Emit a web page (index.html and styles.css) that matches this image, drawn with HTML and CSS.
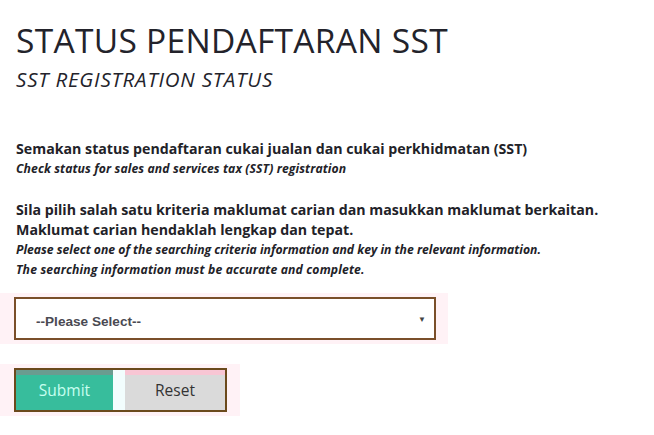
FILE: index.html
```html
<!DOCTYPE html>
<html>
<head>
<meta charset="utf-8">
<link rel="stylesheet" href="styles.css">
</head>
<body>
<div class="page">
  <h1 class="title">STATUS PENDAFTARAN SST</h1>
  <h2 class="subtitle">SST REGISTRATION STATUS</h2>
  <div class="block first">
    <p class="ms">Semakan status pendaftaran cukai jualan dan cukai perkhidmatan (SST)</p>
    <p class="en">Check status for sales and services tax (SST) registration</p>
  </div>
  <div class="block second">
    <p class="ms">Sila pilih salah satu kriteria maklumat carian dan masukkan maklumat berkaitan.</p>
    <p class="ms">Maklumat carian hendaklah lengkap dan tepat.</p>
    <p class="en">Please select one of the searching criteria information and key in the relevant information.</p>
    <p class="en wide">The searching information must be accurate and complete.</p>
  </div>
  <div class="select-wrap">
    <div class="select">
      <span class="select-text">--Please Select--</span>
      <span class="caret">&#9660;</span>
    </div>
  </div>
  <div class="btn-wrap">
    <div class="btns">
      <button class="btn submit">Submit</button>
      <span class="gap"></span>
      <button class="btn reset">Reset</button>
    </div>
  </div>
</div>
</body>
</html>
```
FILE: styles.css
```css
html, body {
  margin: 0;
  padding: 0;
  background: #ffffff;
}
body {
  font-family: "Open Sans", "DejaVu Sans", sans-serif;
  color: #222228;
}
.page {
  padding: 18px 0 0 16px;
}
.title {
  margin: 0;
  font-weight: 400;
  font-size: 33.5px;
  line-height: 44px;
  letter-spacing: 0.3px;
  color: #23232b;
}
.subtitle {
  margin: 3px 0 0 0;
  font-weight: 400;
  font-style: italic;
  font-size: 20.5px;
  line-height: 28px;
  letter-spacing: 0.8px;
  color: #23232b;
}
.block p {
  margin: 0;
}
.first {
  margin-top: 46px;
}
.second {
  margin-top: 21px;
}
.ms {
  font-weight: 700;
  font-size: 14.2px;
  line-height: 20px;
}
.en {
  font-weight: 700;
  font-style: italic;
  font-size: 12.2px;
  line-height: 20px;
}
.first .en {
  letter-spacing: 0.1px;
}
.en.wide {
  letter-spacing: 0.15px;
}
.select-wrap {
  margin: 13px 0 0 -16px;
  width: 448px;
  padding: 4px 0 4px 14px;
  box-sizing: border-box;
  background: #fff2f6;
}
.select {
  width: 422px;
  height: 43px;
  box-sizing: border-box;
  border: 2px solid #7a4f2a;
  background: #fff;
  display: flex;
  align-items: center;
  justify-content: space-between;
  padding: 5px 8px 0 20px;
  font-family: "Liberation Sans", Arial, sans-serif;
}
.select-text {
  font-weight: 700;
  font-size: 13.6px;
  color: #4a4a52;
}
.caret {
  font-size: 8px;
  color: #444;
  margin-bottom: 4px;
}
.btn-wrap {
  margin: 20px 0 0 -16px;
  width: 240px;
  padding: 4px 0 4px 14px;
  box-sizing: border-box;
  background: #fff2f6;
}
.btns {
  width: 213px;
  height: 44px;
  box-sizing: border-box;
  border: 2px solid #6b4a1c;
  display: flex;
}
.btn {
  border: 0;
  margin: 0;
  padding: 0;
  font-family: "Open Sans", sans-serif;
  font-size: 15.5px;
}
.submit {
  width: 97px;
  background: #37bd9c;
  border-top: 5px solid #6a9c90;
  padding-bottom: 5px;
  color: #c8fff0;
}
.gap {
  width: 12px;
  background: #f2fdfd;
}
.reset {
  flex: 1;
  background: #dadada;
  border-top: 5px solid #f8c6d4;
  padding-bottom: 5px;
  color: #333;
}
```
